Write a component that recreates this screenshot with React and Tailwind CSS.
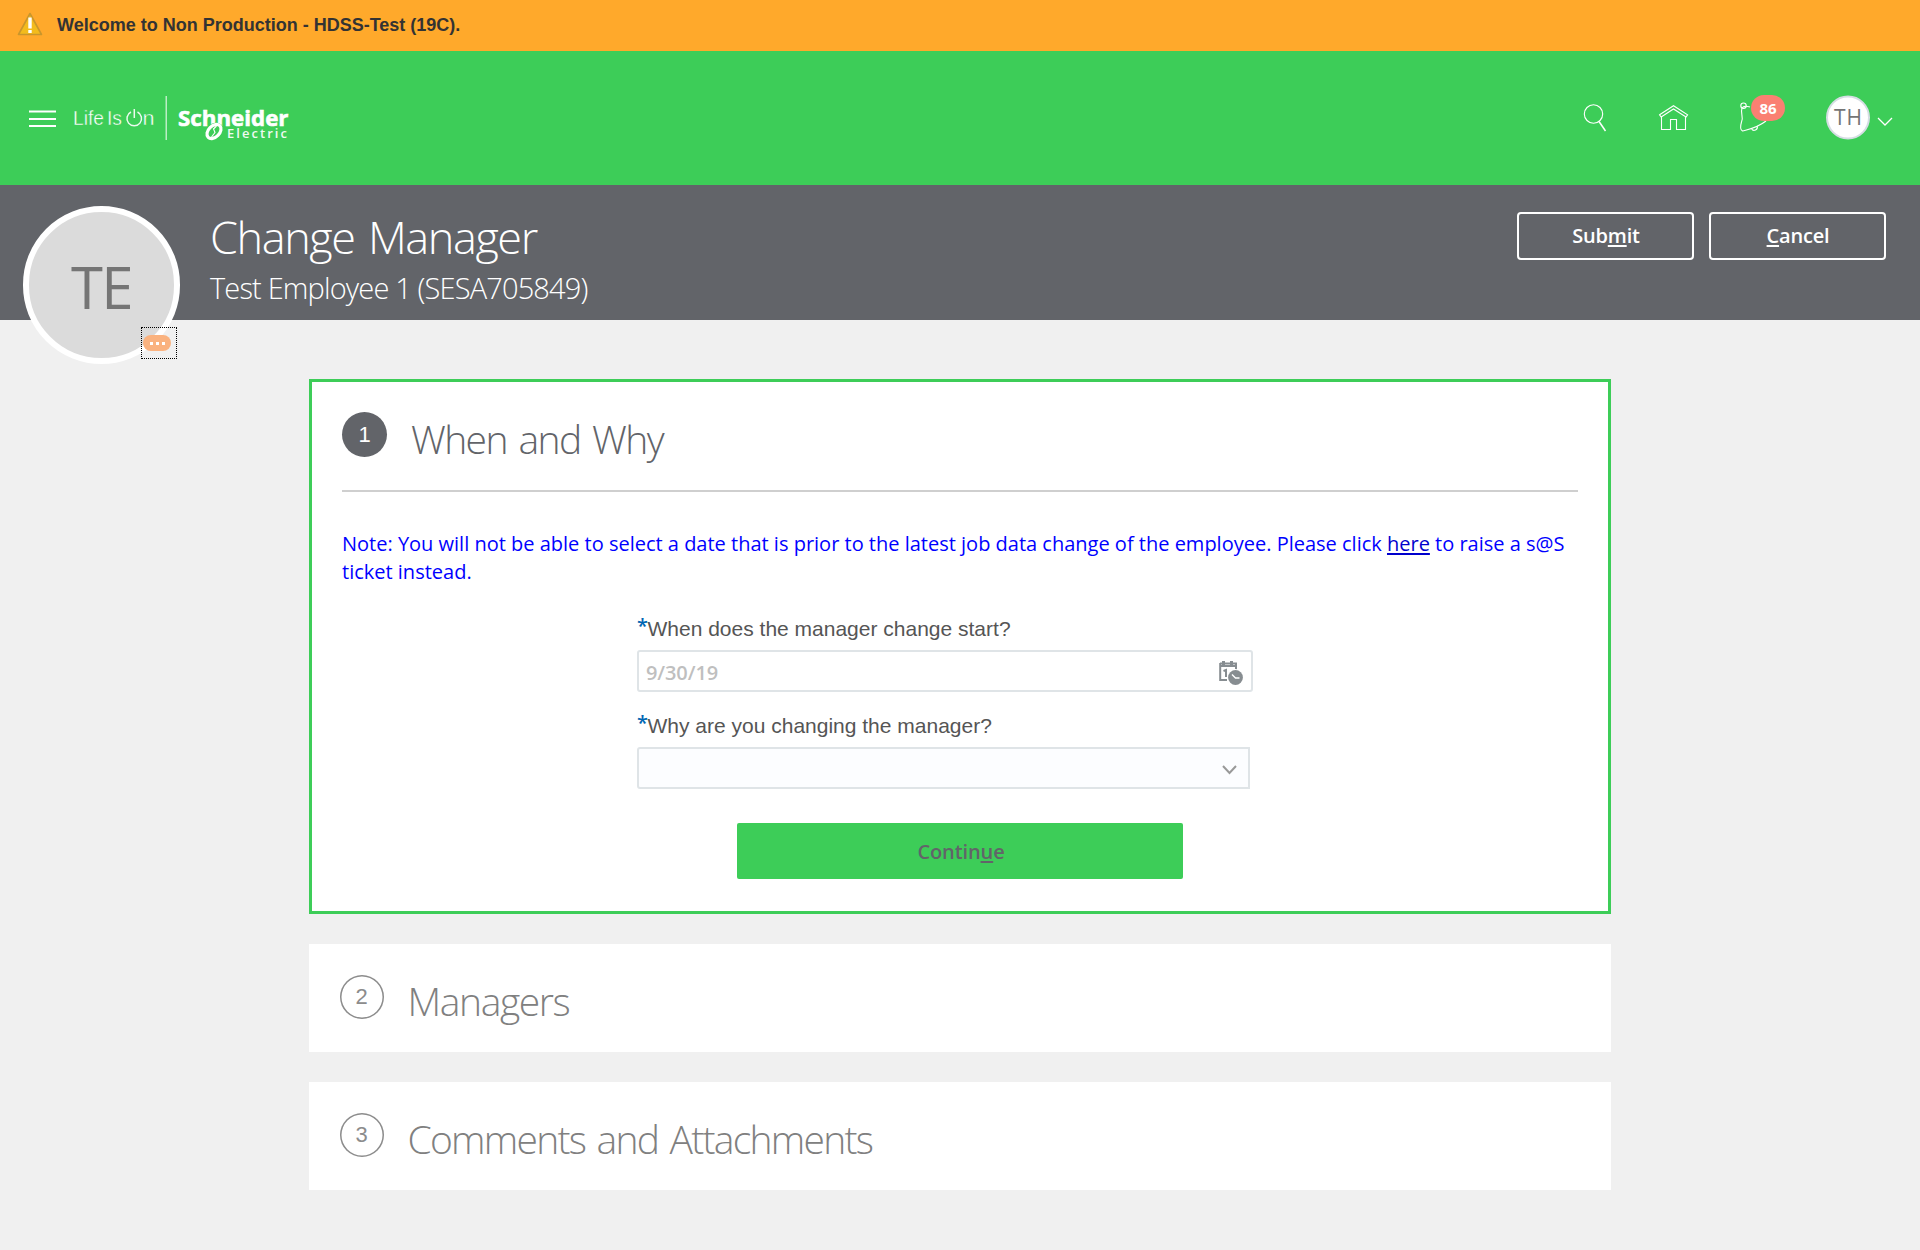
const sans = 'font-["Open_Sans","Noto_Sans",sans-serif]';
const arial = 'font-["Liberation_Sans",Arial,sans-serif]';

function WarningIcon() {
  return (
    <svg width="26" height="24" viewBox="0 0 26 24" className="shrink-0">
      <path d="M13 1.5 L24.5 22.5 H1.5 Z" fill="#f3bb1c" stroke="#c9962c" strokeWidth="1.6" strokeLinejoin="round" />
      <path d="M13 5.5 V16.5 M13 18 V21" stroke="#fff" strokeWidth="3.4" />
    </svg>
  );
}

function Logo() {
  return (
    <svg width="220" height="48" viewBox="0 0 220 48" className="ml-[18px]" fill="#fff">
      <g className={`${arial}`} fontSize="20" fill="#fff" stroke="#3dcd58" strokeWidth=".4">
        <text x="-1" y="31" textLength="31" lengthAdjust="spacingAndGlyphs">Life</text>
        <text x="33" y="31" textLength="15" lengthAdjust="spacingAndGlyphs">Is</text>
        <text x="68.500" y="31" textLength="12" lengthAdjust="spacingAndGlyphs">n</text>
      </g>
      <path d="M57 18 A7.300 7.300 0 1 0 63.500 18 M60.300 15 V24" fill="none" stroke="#fff" strokeWidth="1.500" opacity=".9" />
      <rect x="91.500" y="2" width="1.500" height="44" opacity=".65" />
      <text x="104" y="31.500" textLength="110.500" lengthAdjust="spacingAndGlyphs" fontSize="22" stroke="#fff" strokeWidth=".6" className={`${sans} font-bold`}>Schneider</text>
      <ellipse cx="140" cy="37.500" rx="10" ry="7.500" fill="#3dcd58" transform="rotate(-45 140 37.500)" />
      <ellipse cx="140" cy="37.500" rx="8.200" ry="5.600" fill="none" stroke="#fff" strokeWidth="3.200" transform="rotate(-45 140 37.500)" />
      <path d="M142.500 32 L139.500 35 L141 38.500 L137.500 43" fill="none" stroke="#fff" strokeWidth="1.100" />
      <text x="153" y="43.500" textLength="60" fontSize="13" className={`${sans} font-semibold`} opacity=".92">Electric</text>
    </svg>
  );
}

function Badge({ n, active }) {
  return (
    <div
      className={`${arial} flex shrink-0 items-center justify-center rounded-full text-[22px] leading-none ${
        active ? "size-[45px] bg-[#626469] text-white" : "size-[44px] text-[#8c8c8c] shadow-[inset_0_0_0_1.5px_#8c8c8c]"
      }`}
    >
      {n}
    </div>
  );
}

function CollapsedStep({ n, title, tracking }) {
  return (
    <section className="mt-[30px] flex h-[108px] bg-white pt-[31px] pl-[30.5px]">
      <Badge n={n} />
      <h2 className={`ml-[24px] text-[39px] leading-[51px] font-light text-[#808080] ${tracking}`}>{title}</h2>
    </section>
  );
}

export default function App() {
  return (
    <div className={`${sans} h-[1250px] w-[1920px] overflow-hidden bg-[#f0f0f0]`}>
      <div className={`${arial} flex h-[51px] items-center gap-[14px] bg-[#ffa92b] pl-[17px] pb-[3px]`}>
        <WarningIcon />
        <span className="pt-[2px] text-[18px] font-bold text-[#333]">Welcome to Non Production - HDSS-Test (19C).</span>
      </div>

      <header className="flex h-[134px] items-start justify-between bg-[#3dcd58]">
        <div className="flex items-center pt-[43px] pl-[29px]">
          <svg width="27" height="18" viewBox="0 0 27 18" className="mt-px" stroke="#fff" strokeWidth="2">
            <path d="M0 1.500 H27 M0 9 H27 M0 16 H27" />
          </svg>
          <Logo />
        </div>
        <svg width="300" height="60" viewBox="1600 85 300 60" className="mt-[34px] mr-[20px] overflow-visible" fill="none" stroke="#fff" strokeWidth="1.100">
          <circle cx="1593.500" cy="114" r="9.200" />
          <path d="M1599 121.500 L1605.500 131" strokeWidth="1.500" />
          <path d="M1661.500 116.500 V129.500 H1670.500 V119.500 H1676.500 V129.500 H1685.500 V116.500" />
          <path d="M1659.600 114.800 L1673.500 105.700 L1687.600 114.800 L1686 117 L1673.500 109 L1661.200 117 Z" />
          <path d="M1750 107 Q1744 105 1742 108 C1740 114 1744 116 1741.500 122 C1740 127 1740.500 130 1742.500 131 C1750 129 1757 128 1766 121" />
          <circle cx="1743.500" cy="105.700" r="2.700" />
          <path d="M1751.500 128.500 A3 3 0 1 0 1757 126" />
          <rect x="1751" y="95" width="34" height="26" rx="13" fill="#fa8072" stroke="none" />
          <text x="1768" y="113.500" textAnchor="middle" fontSize="15" fill="#fff" stroke="none" className="font-bold">86</text>
          <circle cx="1848" cy="117.500" r="21" fill="#fff" stroke="#d5dde3" strokeWidth="2" />
          <text x="1848" y="125" textAnchor="middle" fontSize="21" fill="#757575" stroke="none" textLength="28">TH</text>
          <path d="M1878 118 L1885 125 L1892 118" strokeWidth="1.300" />
        </svg>
      </header>

      <div className="flex h-[135px] items-start bg-[#626469] pl-[23px] pr-[34px] text-white">
        <div className="relative mt-[21px] flex h-[158px] w-[157px] shrink-0 items-center justify-center rounded-full border-[6px] border-white bg-[#dbdbdb]">
          <span className="pt-[4px] text-[58px] leading-none tracking-[-1.5px] text-[#757575]">TE</span>
          <div className="absolute top-[115px] left-[112px] flex h-[32px] w-[36px] border border-dotted border-black pt-[7px] pl-[1px]">
            <div className="flex h-[16px] w-[28px] items-center justify-center gap-[3px] rounded-full bg-[#fab27f]">
              <i className="size-[3px] bg-white" />
              <i className="size-[3px] bg-white" />
              <i className="size-[3px] bg-white" />
            </div>
          </div>
        </div>
        <div className="ml-[30px] flex-1 pt-[22px] whitespace-nowrap">
          <h1 className="text-[45px] leading-[60px] font-light tracking-[-1.4px] [word-spacing:3px]">Change Manager</h1>
          <p className="mt-[1px] text-[29px] leading-[40px] font-light tracking-[-0.85px]">Test Employee 1 (SESA705849)</p>
        </div>
        <div className="mt-[27px] flex gap-[15px] text-[20px] font-semibold tracking-[-0.2px]">
          <button className="h-[48px] w-[177px] rounded-[4px] border-2 border-white pl-px">
            Sub<span className="underline decoration-2 underline-offset-2">m</span>it
          </button>
          <button className="h-[48px] w-[177px] rounded-[4px] border-2 border-white pl-px">
            <span className="underline decoration-2 underline-offset-2">C</span>ancel
          </button>
        </div>
      </div>

      <main className="mx-auto mt-[59px] w-[1302px]">
        <section className="h-[535px] border-[3px] border-[#3dcd58] bg-white px-[30px]">
          <div className="flex h-[110px] border-b-2 border-[#cfcfcf] pt-[30px]">
            <Badge n="1" active />
            <h2 className="ml-[24px] text-[39px] leading-[53px] font-light tracking-[-1.6px] text-[#626469] [word-spacing:3px]">When and Why</h2>
          </div>
          <p className="mt-[38px] text-[20px] leading-[28px] whitespace-nowrap text-[#0000ff]">
            Note: You will not be able to select a date that is prior to the latest job data change of the employee. Please click{" "}
            <a className="text-[#0000cd] underline decoration-2 underline-offset-2">here</a> to raise a s@S
            <br />
            ticket instead.
          </p>
          <div className="mt-[26px] ml-[295px] w-[616px]">
            <label className={`${arial} flex h-[34px] text-[21px] leading-[34px] text-[#555]`}>
              <b className={`${sans} w-[10.5px] text-[20px] leading-[28px] font-semibold text-[#0066b3]`}>*</b>When does the manager change start?
            </label>
            <div className="mt-[4px] flex h-[42px] items-center justify-between rounded-[3px] border-2 border-[#dfe4e7] pr-[8px] pl-[7px]">
              <span className="pt-[3px] text-[20px] font-semibold tracking-[-0.1px] text-[#bfbfbf]">9/30/19</span>
              <svg width="24" height="24" viewBox="0 0 24 24" className="mt-[3px]">
                <path d="M1 2.500 H17 V9 M1 5 H17 M1.200 2 V19 H8" fill="none" stroke="#878d91" strokeWidth="2" />
                <path d="M4.500 0 V4 M12.500 0 V4" stroke="#878d91" strokeWidth="3" />
                <path d="M4.500 10 L7 9 V16" fill="none" stroke="#878d91" strokeWidth="2" />
                <circle cx="16.500" cy="16.500" r="8.500" fill="#fff" />
                <circle cx="16.500" cy="16.500" r="7.400" fill="#878d91" />
                <path d="M13 13.500 L16.500 17 H20.500" fill="none" stroke="#fff" strokeWidth="1.400" />
              </svg>
            </div>
            <label className={`${arial} mt-[17px] flex h-[34px] text-[21px] leading-[34px] text-[#555]`}>
              <b className={`${sans} w-[10.5px] text-[20px] leading-[28px] font-semibold text-[#0066b3]`}>*</b>Why are you changing the manager?
            </label>
            <div className="mt-[4px] flex h-[42px] w-[613px] items-center justify-end rounded-l-[3px] border-2 border-[#dfe4e7] bg-[#fcfdff] pr-[11px]">
              <svg width="15" height="10" viewBox="0 0 15 10" className="mt-[3px]" fill="none" stroke="#999" strokeWidth="2">
                <path d="M1 1 L7.500 8 L14 1" />
              </svg>
            </div>
          </div>
          <button className="mt-[34px] ml-[395px] block h-[56px] w-[446px] rounded-[2px] bg-[#3dcd58] pt-[2px] pl-[2px] text-[20px] font-semibold tracking-[-0.1px] text-[#626469]">
            Contin<span className="underline decoration-2 underline-offset-2">u</span>e
          </button>
        </section>
        <CollapsedStep n="2" title="Managers" tracking="tracking-[-1.4px]" />
        <CollapsedStep n="3" title="Comments and Attachments" tracking="tracking-[-1.75px] [word-spacing:3px]" />
      </main>
    </div>
  );
}
